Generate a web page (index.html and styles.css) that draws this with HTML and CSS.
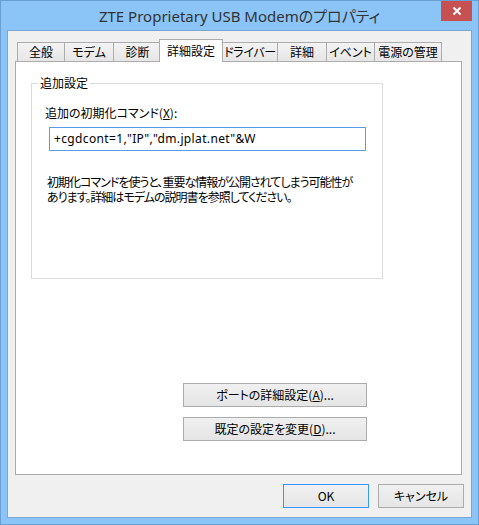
FILE: index.html
```html
<!DOCTYPE html>
<html lang="ja">
<head>
<meta charset="utf-8">
<title>ZTE Proprietary USB Modemのプロパティ</title>
<link rel="stylesheet" href="styles.css">
</head>
<body>
<div class="window">
  <div class="titlebar">
    <div class="title">ZTE Proprietary USB Modemのプロパティ</div>
    <div class="close" aria-label="閉じる">
      <svg width="10" height="10" viewBox="0 0 10 10"><path d="M1.5 1.5 L8.5 8.5 M8.5 1.5 L1.5 8.5" stroke="#fff" stroke-width="2" fill="none"/></svg>
    </div>
  </div>
  <div class="client">
    <div class="tabs">
      <div class="tab t-general">全般</div>
      <div class="tab t-modem">モデム</div>
      <div class="tab t-diag">診断</div>
      <div class="tab t-adv selected">詳細設定</div>
      <div class="tab t-driver">ドライバー</div>
      <div class="tab t-detail">詳細</div>
      <div class="tab t-event">イベント</div>
      <div class="tab t-power">電源の管理</div>
    </div>
    <div class="panel">
      <fieldset class="group">
        <legend>追加設定</legend>
        <div class="group-body">
          <div class="field-label">追加の初期化コマンド(<u>X</u>):</div>
          <div class="textbox">+cgdcont=1,"IP","dm.jplat.net"&amp;W</div>
          <p class="note">初期化コマンドを使うと、重要な情報が公開されてしまう可能性が<br>あります。詳細はモデムの説明書を参照してください。</p>
        </div>
      </fieldset>
      <div class="panel-actions">
        <button class="btn wide">ポートの詳細設定(<u>A</u>)...</button>
        <button class="btn wide">既定の設定を変更(<u>D</u>)...</button>
      </div>
    </div>
    <div class="dialog-actions">
      <button class="btn dlg default">OK</button>
      <button class="btn dlg">キャンセル</button>
    </div>
  </div>
</div>
</body>
</html>
```

FILE: styles.css
```css
* { box-sizing: border-box; }
html, body { margin: 0; padding: 0; }
body {
  width: 479px;
  height: 525px;
  overflow: hidden;
  font-family: "Noto Sans CJK JP", sans-serif;
  font-size: 12px;
  font-feature-settings: "palt";
  color: #000;
}
.window {
  width: 479px;
  height: 525px;
  background: #8bc4f7;
  border: 1px solid #6b9fd3;
  display: flex;
  flex-direction: column;
}
.titlebar {
  height: 29px;
  flex: none;
  display: grid;
  grid-template-columns: 1fr auto 1fr;
  padding: 0 6px;
}
.title {
  grid-column: 2;
  align-self: center;
  font-family: "Noto Sans", "Noto Sans CJK JP", sans-serif;
  font-size: 15px;
  line-height: 20px;
  color: #333;
  white-space: nowrap;
  margin-top: 1px;
}
.close {
  grid-column: 3;
  justify-self: end;
  width: 31px;
  height: 20px;
  background: #c75050;
  display: flex;
  align-items: center;
  justify-content: center;
}
.client {
  flex: 1;
  margin: 0 6px 6px;
  background: #f0f0f0;
  border: 1px solid #7aa6d4;
  padding-top: 8px;
  display: flex;
  flex-direction: column;
}
.tabs {
  display: flex;
  align-items: flex-end;
  height: 22px;
  margin-left: 9px;
}
.tab {
  height: 19px;
  border: 1px solid #acacac;
  border-bottom: none;
  background: linear-gradient(#f3f3f3, #e6e6e6);
  display: flex;
  align-items: center;
  justify-content: center;
  white-space: nowrap;
  margin-left: -1px;
  line-height: 14px;
}
.t-general { width: 48px; margin-left: 0; }
.t-modem { width: 50px; }
.t-diag { width: 49px; }
.t-adv { width: 62px; }
.t-driver { width: 56px; letter-spacing: -0.3px; }
.t-detail { width: 50px; }
.t-event { width: 49px; }
.t-power { width: 68px; }
.tab.selected {
  width: 64px;
  height: 23px;
  margin-left: -3px;
  margin-bottom: -1px;
  background: #fff;
  position: relative;
  z-index: 1;
}
.panel {
  flex: none;
  height: 414px;
  margin: 0 9px 0 7px;
  border: 1px solid #acacac;
  background: #fff;
  display: flex;
  flex-direction: column;
}
.group {
  margin: 14px 0 0 15px;
  padding: 0;
  min-width: 0;
  width: 352px;
  height: 203px;
  border: 1px solid #dcdcdc;
}
.group legend {
  margin-left: 6px;
  padding: 0 2px;
  line-height: 14px;
}
.group-body {
  padding: 15px 0 0 13px;
}
.field-label {
  line-height: 15px;
  white-space: nowrap;
}
.textbox {
  margin: 7px 0 0 4px;
  width: 317px;
  height: 24px;
  border: 1px solid #569de5;
  background: #fff;
  padding-left: 4px;
  font-family: "Noto Sans", sans-serif;
  font-size: 12px;
  letter-spacing: 0.35px;
  line-height: 22px;
  white-space: nowrap;
}
.note {
  margin: 23px 0 0 2px;
  line-height: 15px;
  letter-spacing: -1px;
  white-space: nowrap;
}
.panel-actions {
  margin-top: auto;
  margin-left: 167px;
  padding-bottom: 33px;
  display: flex;
  flex-direction: column;
  gap: 10px;
}
.btn {
  font: inherit;
  color: #000;
  height: 24px;
  padding: 0;
  border: 1px solid #acacac;
  background: linear-gradient(#f0f0f0, #e5e5e5);
  line-height: 20px;
  white-space: nowrap;
}
.btn.wide { width: 184px; }
.dialog-actions {
  display: flex;
  justify-content: flex-end;
  gap: 9px;
  padding: 9px 7px 0 0;
}
.btn.dlg { width: 86px; }
.btn.default { border-color: #3399ff; }
```
